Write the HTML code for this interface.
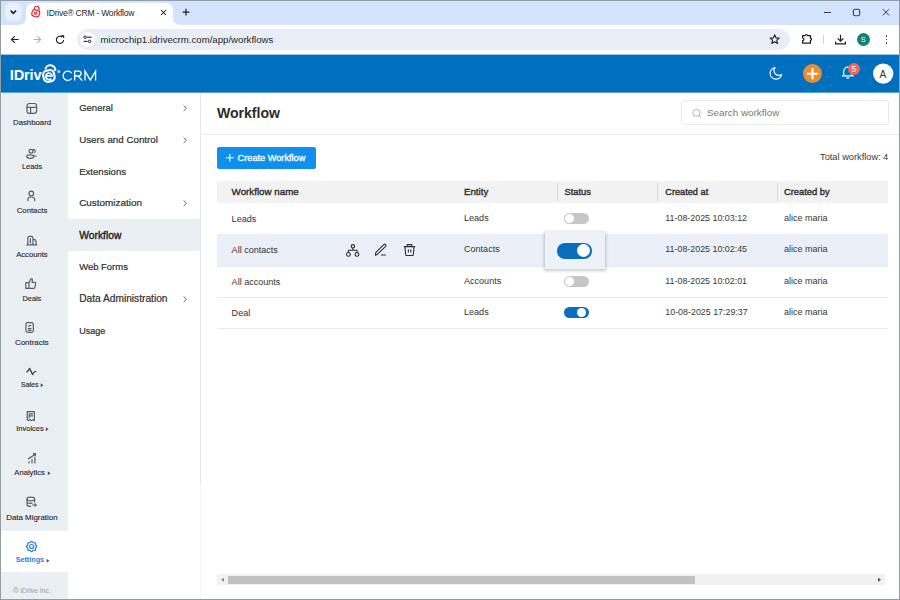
<!DOCTYPE html>
<html><head><meta charset="utf-8"><title>Workflow</title>
<style>
*{box-sizing:border-box;margin:0;padding:0}
html,body{width:900px;height:600px;overflow:hidden;background:#fff;font-family:"Liberation Sans",sans-serif}
.a{position:absolute}
.t{position:absolute;line-height:1;white-space:nowrap}
svg{overflow:visible}
</style></head><body>
<div class="a" style="left:0px;top:0px;width:900px;height:25px;background:#d3e3fd"></div>
<div class="a" style="left:5px;top:3px;width:17px;height:18px;background:#e8f0fe;border-radius:6px"></div>
<svg class="a" style="left:0;top:0" width="900" height="600" viewBox="0 0 900 600"><path d="M10.6 10.6 L13.3 13.3 L16 10.6" stroke="#1f1f1f" stroke-width="1.6" fill="none"/></svg>
<svg class="a" style="left:18px;top:3px" width="164" height="22" viewBox="0 0 164 22"><path d="M0 22 Q8 22 8 14 L8 8 Q8 0 16 0 L147 0 Q155 0 155 8 L155 14 Q155 22 163 22 Z" fill="#fff"/></svg>
<svg class="a" style="left:0;top:0" width="900" height="600" viewBox="0 0 900 600"><g transform="rotate(12 36 12)"><path d="M33.6 10 V8.6 A2.4 2.4 0 0 1 38.4 8.6 V10" stroke="#e8262d" stroke-width="1.2" fill="none"/><rect x="32.2" y="10" width="7.6" height="6.6" rx="2.6" stroke="#e8262d" stroke-width="1.2" fill="none"/><path d="M34.6 13.3 H37.4 A1.4 1.4 0 1 0 37 14.4" stroke="#e8262d" stroke-width="0.9" fill="none"/></g></svg>
<div class="t" style="left:46.60px;top:8.970px;font-size:8.6px;color:#1f1f1f;font-weight:400;letter-spacing:-0.27px">IDrive® CRM - Workflow</div>
<svg class="a" style="left:0;top:0" width="900" height="600" viewBox="0 0 900 600"><path d="M161 10 L166 15 M166 10 L161 15" stroke="#1f1f1f" stroke-width="1.05"/><path d="M186 8.8 V15.6 M182.6 12.2 H189.4" stroke="#1f1f1f" stroke-width="1.2"/></svg>
<svg class="a" style="left:0;top:0" width="900" height="600" viewBox="0 0 900 600"><path d="M824 12.5 H831" stroke="#3b3b3b" stroke-width="1"/><rect x="853.3" y="9.3" width="6.4" height="6.4" rx="1.6" stroke="#3b3b3b" stroke-width="1.1" fill="none"/><path d="M882.8 9.2 L889 15.4 M889 9.2 L882.8 15.4" stroke="#3b3b3b" stroke-width="1"/></svg>
<div class="a" style="left:0px;top:25px;width:900px;height:29px;background:#fff"></div>
<div class="a" style="left:77px;top:29px;width:713px;height:21px;background:#e9eef6;border-radius:10.5px"></div>
<svg class="a" style="left:0;top:0" width="900" height="600" viewBox="0 0 900 600"><path d="M18.6 39.5 H11.6 M14.8 36.2 L11.5 39.5 L14.8 42.8" stroke="#1f1f1f" stroke-width="1.1" fill="none"/><path d="M33.6 39.5 H40.6 M37.4 36.2 L40.7 39.5 L37.4 42.8" stroke="#b0b0b0" stroke-width="1.1" fill="none"/><path d="M63.6 40 A3.6 3.6 0 1 1 62.3 37" stroke="#1f1f1f" stroke-width="1.15" fill="none"/><path d="M61 35.3 H64.2 V38.5 Z" fill="#1f1f1f"/></svg>
<div class="a" style="left:80px;top:32px;width:15px;height:15px;background:#fff;border-radius:50%"></div>
<svg class="a" style="left:0;top:0" width="900" height="600" viewBox="0 0 900 600"><circle cx="85.2" cy="37.2" r="1.25" stroke="#1f1f1f" stroke-width="1" fill="none"/><path d="M87.2 37.2 H91.6" stroke="#1f1f1f" stroke-width="1.1"/><circle cx="89.6" cy="41.4" r="1.25" stroke="#1f1f1f" stroke-width="1" fill="none"/><path d="M83.6 41.4 H87.6" stroke="#1f1f1f" stroke-width="1.1"/></svg>
<div class="t" style="left:100.60px;top:34.990px;font-size:9.64px;color:#1f1f1f;font-weight:400;">microchip1.idrivecrm.com/app/workflows</div>
<svg class="a" style="left:0;top:0" width="900" height="600" viewBox="0 0 900 600"><path d="M774.7 34.8 L776 37.9 L779.3 38.1 L776.8 40.2 L777.6 43.5 L774.7 41.7 L771.8 43.5 L772.6 40.2 L770.1 38.1 L773.4 37.9 Z" stroke="#1f1f1f" stroke-width="1.1" fill="none" stroke-linejoin="round"/></svg>
<svg class="a" style="left:0;top:0" width="900" height="600" viewBox="0 0 900 600"><path d="M802.6 35.6 H805.2 A1.1 1.1 0 0 1 807.4 35.6 H810.4 V38.2 A1.1 1.1 0 0 1 810.4 40.4 V43.2 H802.6 V40.6 A1.3 1.3 0 0 0 802.6 38 Z" stroke="#1f1f1f" stroke-width="1.2" fill="none" stroke-linejoin="round"/></svg>
<div class="a" style="left:823px;top:35px;width:1px;height:9px;background:#c7d3e8"></div>
<svg class="a" style="left:0;top:0" width="900" height="600" viewBox="0 0 900 600"><path d="M840.5 34.8 V41 M837.6 38.3 L840.5 41.2 L843.4 38.3 M835.6 41.5 V43.8 H845.4 V41.5" stroke="#1f1f1f" stroke-width="1.2" fill="none"/></svg>
<div class="a" style="left:857px;top:33px;width:13px;height:13px;background:#15806f;border-radius:50%"></div>
<div class="t" style="left:860.80px;top:36.471px;font-size:7.3px;color:#fff;font-weight:400;">S</div>
<div class="a" style="left:885.7px;top:35.0px;width:1.6px;height:1.6px;background:#1f1f1f;border-radius:50%"></div>
<div class="a" style="left:885.7px;top:38.6px;width:1.6px;height:1.6px;background:#1f1f1f;border-radius:50%"></div>
<div class="a" style="left:885.7px;top:42.2px;width:1.6px;height:1.6px;background:#1f1f1f;border-radius:50%"></div>
<div class="a" style="left:0px;top:55px;width:900px;height:37px;background:#0070be"></div>
<div class="a" style="left:0px;top:54px;width:900px;height:1px;background:#9cc4e4"></div>
<div class="t" style="left:9.80px;top:67.991px;font-size:14.6px;color:#fff;font-weight:700;letter-spacing:-0.15px">IDriv</div>
<svg class="a" style="left:0;top:0" width="900" height="600" viewBox="0 0 900 600"><g transform="rotate(-12 48.8 76)"><rect x="43.4" y="70.4" width="11" height="11.2" rx="4" stroke="#fff" stroke-width="2.1" fill="none"/></g><path d="M45.4 69.4 A4.7 4.6 0 0 1 55.2 70.8" stroke="#fff" stroke-width="2" fill="none"/><path d="M45.9 75.9 H52 A3.1 3.3 0 1 0 51.2 78.6" stroke="#fff" stroke-width="1.8" fill="none"/><circle cx="58.8" cy="71.6" r="1.5" fill="#fff" opacity="0.7"/></svg>
<svg class="a" style="left:0;top:0" width="900" height="600" viewBox="0 0 900 600"><g stroke="#fff" stroke-width="1.3" fill="none"><path d="M71.6 73.2 A4.6 4.7 0 1 0 71.6 78.4"/><path d="M74.7 80.6 V71.2 H78.7 A2.4 2.4 0 0 1 78.7 76 H74.7 M78.2 76 L82.2 80.6"/><path d="M85 80.6 V71.2 L90.3 80.2 L95.6 71.2 V80.6"/></g></svg>
<svg class="a" style="left:0;top:0" width="900" height="600" viewBox="0 0 900 600"><path d="M775 67.6 A5.8 5.8 0 1 0 781.6 74.4 A4.8 4.8 0 0 1 775 67.6 Z" stroke="#fff" stroke-width="1.2" fill="none" stroke-linejoin="round"/></svg>
<div class="a" style="left:803px;top:64px;width:19px;height:19px;background:#e98f2e;border-radius:50%"></div>
<svg class="a" style="left:0;top:0" width="900" height="600" viewBox="0 0 900 600"><path d="M812.5 69 V78.4 M807.8 73.7 H817.2" stroke="#fff" stroke-width="2.1" stroke-linecap="round"/></svg>
<svg class="a" style="left:0;top:0" width="900" height="600" viewBox="0 0 900 600"><path d="M843.7 75.4 V71.6 A4.1 4.4 0 0 1 851.9 71.6 V75.4" stroke="#fff" stroke-width="1.15" fill="none"/><path d="M842.4 75.9 H853.2" stroke="#fff" stroke-width="1.3" stroke-linecap="round"/><path d="M846.5 77.2 A1.4 1.4 0 0 0 849.1 77.2" stroke="#fff" stroke-width="1.15" fill="none"/></svg>
<div class="a" style="left:848px;top:63px;width:12px;height:12px;background:#f2665c;border-radius:50%"></div>
<div class="t" style="left:851.60px;top:64.970px;font-size:8.6px;color:#fff;font-weight:400;">5</div>
<svg class="a" style="left:0;top:0" width="900" height="600" viewBox="0 0 900 600"><circle cx="883.2" cy="73.6" r="10.2" fill="#fff"/></svg>
<div class="t" style="left:879.60px;top:70.016px;font-size:10.2px;color:#333;font-weight:400;">A</div>
<div class="a" style="left:0px;top:92px;width:68px;height:508px;background:#eaeff4"></div>
<div class="a" style="left:0px;top:531px;width:68px;height:41px;background:#fff"></div>
<svg class="a" style="left:0;top:0" width="900" height="600" viewBox="0 0 900 600"><g stroke="#55606a" stroke-width="1.2" fill="none" stroke-linejoin="round" stroke-linecap="round" ><rect x="27" y="103.5" width="9.6" height="9.8" rx="2.4"/><path d="M27 107.3 H36.6 M30.6 107.3 V113.3"/></g></svg>
<div class="t" style="left:13.00px;top:119.047px;font-size:7.8px;color:#2e2e2e;font-weight:400;-webkit-text-stroke:0.15px #2e2e2e">Dashboard</div>
<svg class="a" style="left:0;top:0" width="900" height="600" viewBox="0 0 900 600"><g stroke="#55606a" stroke-width="1.2" fill="none" stroke-linejoin="round" stroke-linecap="round" ><circle cx="31" cy="151.2" r="1.9"/><path d="M33.2 149.6 A1.7 1.7 0 0 1 34.6 152.6"/><ellipse cx="30.3" cy="156.6" rx="3.6" ry="1.7"/><path d="M34.2 156 H36.2"/></g></svg>
<div class="t" style="left:22.00px;top:162.986px;font-size:7.4px;color:#2e2e2e;font-weight:400;-webkit-text-stroke:0.15px #2e2e2e">Leads</div>
<svg class="a" style="left:0;top:0" width="900" height="600" viewBox="0 0 900 600"><g stroke="#55606a" stroke-width="1.2" fill="none" stroke-linejoin="round" stroke-linecap="round" ><circle cx="31.3" cy="193.5" r="2.3"/><path d="M27.9 200.6 V199.6 A3.4 2.6 0 0 1 34.7 199.6 V200.6"/></g></svg>
<div class="t" style="left:16.80px;top:207.007px;font-size:7.73px;color:#2e2e2e;font-weight:400;-webkit-text-stroke:0.15px #2e2e2e">Contacts</div>
<svg class="a" style="left:0;top:0" width="900" height="600" viewBox="0 0 900 600"><g stroke="#55606a" stroke-width="1.2" fill="none" stroke-linejoin="round" stroke-linecap="round" ><path d="M27.8 244.8 V238 A1.8 1.8 0 0 1 29.6 236.3 H31.2 A1.8 1.8 0 0 1 33 238 V244.8 M33 239.6 H34.4 A1.6 1.6 0 0 1 36 241.2 V244.8 M26.8 244.8 H36.8 M30.4 238.6 V243"/></g></svg>
<div class="t" style="left:16.20px;top:250.966px;font-size:7.66px;color:#2e2e2e;font-weight:400;-webkit-text-stroke:0.15px #2e2e2e">Accounts</div>
<svg class="a" style="left:0;top:0" width="900" height="600" viewBox="0 0 900 600"><g stroke="#55606a" stroke-width="1.2" fill="none" stroke-linejoin="round" stroke-linecap="round" ><path d="M29 282.6 L30.6 279.2 A1 1 0 0 1 32.4 279.8 L32 282.4 H34.6 A1.1 1.1 0 0 1 35.6 283.7 L34.8 287.6 A1.2 1.2 0 0 1 33.6 288.4 H29 Z M25.8 282.6 H29 V288.4 H25.8 Z"/></g></svg>
<div class="t" style="left:22.50px;top:295.028px;font-size:7.35px;color:#2e2e2e;font-weight:400;-webkit-text-stroke:0.15px #2e2e2e">Deals</div>
<svg class="a" style="left:0;top:0" width="900" height="600" viewBox="0 0 900 600"><g stroke="#55606a" stroke-width="1.2" fill="none" stroke-linejoin="round" stroke-linecap="round" ><rect x="25.9" y="322.6" width="7.4" height="9.8" rx="1.8"/><path d="M28.4 326.2 L30.8 325.4 M28.3 328.6 H31 M28.3 330.4 H31"/></g></svg>
<div class="t" style="left:15.00px;top:338.963px;font-size:7.9px;color:#2e2e2e;font-weight:400;-webkit-text-stroke:0.15px #2e2e2e">Contracts</div>
<svg class="a" style="left:0;top:0" width="900" height="600" viewBox="0 0 900 600"><path d="M26.9 371.9 Q28.2 371.2 29.6 368.4 L32.6 374.6 Q33.8 371.6 35.8 371.4" stroke="#3f4a53" stroke-width="1.4" fill="none" stroke-linejoin="round" stroke-linecap="round"/></svg>
<div class="t" style="left:21.00px;top:381.024px;font-size:7.0px;color:#2e2e2e;font-weight:400;-webkit-text-stroke:0.15px #2e2e2e">Sales</div>
<svg class="a" style="left:0;top:0" width="900" height="600" viewBox="0 0 900 600"><path d="M40.7 383.3 L43.5 385.3 L40.7 387.3 Z" fill="#555"/></svg>
<svg class="a" style="left:0;top:0" width="900" height="600" viewBox="0 0 900 600"><g stroke="#55606a" stroke-width="1.2" fill="none" stroke-linejoin="round" stroke-linecap="round" ><path d="M27.2 411.6 H34.4 V420.6 L33 419.8 L31.6 420.6 L30.2 419.8 L28.6 420.6 L27.2 419.8 Z M29.2 413.8 H32.6 M30.4 415.8 H32.6 M29.2 413.8 V418"/></g></svg>
<div class="t" style="left:16.20px;top:424.984px;font-size:7.52px;color:#2e2e2e;font-weight:400;-webkit-text-stroke:0.15px #2e2e2e">Invoices</div>
<svg class="a" style="left:0;top:0" width="900" height="600" viewBox="0 0 900 600"><path d="M45.8 427.3 L48.599999999999994 429.3 L45.8 431.3 Z" fill="#555"/></svg>
<svg class="a" style="left:0;top:0" width="900" height="600" viewBox="0 0 900 600"><g stroke="#55606a" stroke-width="1.2" fill="none" stroke-linejoin="round" stroke-linecap="round" ><path d="M29 463 V461.6 M32 463 V459.6 M34.9 463 V457.2 M28.4 458.6 Q32 457 35 454 M33.4 453.6 H35.4 V455.6"/></g></svg>
<div class="t" style="left:14.30px;top:468.957px;font-size:7.67px;color:#2e2e2e;font-weight:400;-webkit-text-stroke:0.15px #2e2e2e">Analytics</div>
<svg class="a" style="left:0;top:0" width="900" height="600" viewBox="0 0 900 600"><path d="M47.8 471.3 L50.599999999999994 473.3 L47.8 475.3 Z" fill="#555"/></svg>
<svg class="a" style="left:0;top:0" width="900" height="600" viewBox="0 0 900 600"><g stroke="#55606a" stroke-width="1.2" fill="none" stroke-linejoin="round" stroke-linecap="round" ><ellipse cx="30.8" cy="499" rx="3.8" ry="1.8"/><path d="M27 499 V505 A3.8 1.6 0 0 0 30.6 506.4 M34.6 499 V502 M27 502.2 A3.8 1.6 0 0 0 32 503.2"/><path d="M32.6 505 H36 M35 503.8 L36.2 505 L35 506.2" stroke-width="1.1"/></g></svg>
<div class="t" style="left:6.20px;top:513.996px;font-size:7.92px;color:#2e2e2e;font-weight:400;-webkit-text-stroke:0.15px #2e2e2e">Data Migration</div>
<svg class="a" style="left:0;top:0" width="900" height="600" viewBox="0 0 900 600"><path d="M31.60 541.30 L33.21 542.62 L35.28 542.82 L35.48 544.89 L36.80 546.50 L35.48 548.11 L35.28 550.18 L33.21 550.38 L31.60 551.70 L29.99 550.38 L27.92 550.18 L27.72 548.11 L26.40 546.50 L27.72 544.89 L27.92 542.82 L29.99 542.62 Z" stroke="#2a86d6" stroke-width="1.3" fill="none" stroke-linejoin="round"/><circle cx="31.6" cy="546.5" r="2" stroke="#2a86d6" stroke-width="1.2" fill="none"/></svg>
<div class="t" style="left:15.70px;top:555.955px;font-size:7.2px;color:#1f7fd2;font-weight:700;">Settings</div>
<svg class="a" style="left:0;top:0" width="900" height="600" viewBox="0 0 900 600"><path d="M46.6 558.8 L49.4 560.8 L46.6 562.8 Z" fill="#555"/></svg>
<div class="t" style="left:13.30px;top:587.944px;font-size:6.8px;color:#a7acb1;font-weight:400;-webkit-text-stroke:0.15px #a7acb1">© IDrive Inc.</div>
<div class="a" style="left:68px;top:92px;width:133px;height:508px;background:#fff"></div>
<div class="a" style="left:200px;top:92px;width:1px;height:393px;background:#e4e8ec"></div>
<div class="a" style="left:200px;top:485px;width:1px;height:114px;background:#f2f4f6"></div>
<div class="a" style="left:68px;top:219px;width:132px;height:32px;background:#eaeff4"></div>
<div class="t" style="left:79.20px;top:103.008px;font-size:9.5px;color:#2e2e2e;font-weight:400;-webkit-text-stroke:0.2px #2e2e2e">General</div>
<svg class="a" style="left:0;top:0" width="900" height="600" viewBox="0 0 900 600"><path d="M183.6 105.6 L186.4 108.3 L183.6 111" stroke="#666" stroke-width="1" fill="none"/></svg>
<div class="t" style="left:79.20px;top:134.971px;font-size:9.78px;color:#2e2e2e;font-weight:400;-webkit-text-stroke:0.2px #2e2e2e">Users and Control</div>
<svg class="a" style="left:0;top:0" width="900" height="600" viewBox="0 0 900 600"><path d="M183.6 137.6 L186.4 140.3 L183.6 143" stroke="#666" stroke-width="1" fill="none"/></svg>
<div class="t" style="left:79.20px;top:167.032px;font-size:9.59px;color:#2e2e2e;font-weight:400;-webkit-text-stroke:0.2px #2e2e2e">Extensions</div>
<div class="t" style="left:79.20px;top:197.961px;font-size:9.91px;color:#2e2e2e;font-weight:400;-webkit-text-stroke:0.2px #2e2e2e">Customization</div>
<svg class="a" style="left:0;top:0" width="900" height="600" viewBox="0 0 900 600"><path d="M183.6 200.6 L186.4 203.3 L183.6 206" stroke="#666" stroke-width="1" fill="none"/></svg>
<div class="t" style="left:79.20px;top:230.981px;font-size:10.3px;color:#262626;font-weight:400;-webkit-text-stroke:0.4px #262626">Workflow</div>
<div class="t" style="left:79.20px;top:262.042px;font-size:9.46px;color:#2e2e2e;font-weight:400;-webkit-text-stroke:0.2px #2e2e2e">Web Forms</div>
<div class="t" style="left:79.20px;top:294.016px;font-size:10.2px;color:#2e2e2e;font-weight:400;-webkit-text-stroke:0.2px #2e2e2e">Data Administration</div>
<svg class="a" style="left:0;top:0" width="900" height="600" viewBox="0 0 900 600"><path d="M183.6 296.6 L186.4 299.3 L183.6 302" stroke="#666" stroke-width="1" fill="none"/></svg>
<div class="t" style="left:79.20px;top:327.031px;font-size:9.0px;color:#2e2e2e;font-weight:400;-webkit-text-stroke:0.2px #2e2e2e">Usage</div>
<div class="t" style="left:216.90px;top:106.014px;font-size:14.1px;color:#2c2c2c;font-weight:700;">Workflow</div>
<div class="a" style="left:681px;top:100px;width:208px;height:25px;border:1px solid #e8e9eb;border-radius:2.5px;background:#fff"></div>
<svg class="a" style="left:0;top:0" width="900" height="600" viewBox="0 0 900 600"><circle cx="696.4" cy="112.8" r="3.4" stroke="#bdbdbd" stroke-width="1.05" fill="none"/><path d="M698.9 115.3 L701 117.4" stroke="#bdbdbd" stroke-width="1.05"/></svg>
<div class="t" style="left:707.00px;top:107.995px;font-size:9.87px;color:#74787c;font-weight:400;">Search workflow</div>
<div class="a" style="left:201px;top:134px;width:698px;height:1px;background:#e6ebf0"></div>
<div class="a" style="left:217px;top:147px;width:99px;height:22px;background:#1090ec;border-radius:2px"></div>
<svg class="a" style="left:0;top:0" width="900" height="600" viewBox="0 0 900 600"><path d="M229.8 153.9 V161.7 M225.9 157.8 H233.7" stroke="#fff" stroke-width="1.1"/></svg>
<div class="t" style="left:237.60px;top:153.912px;font-size:9.2px;color:#fff;font-weight:400;-webkit-text-stroke:0.3px #fff">Create Workflow</div>
<div class="t" style="left:820.00px;top:152.903px;font-size:9.27px;color:#3a3a3a;font-weight:400;">Total workflow:</div>
<div class="t" style="left:883.00px;top:152.903px;font-size:9.27px;color:#3a3a3a;font-weight:400;">4</div>
<div class="a" style="left:217px;top:181px;width:671px;height:22px;background:#f2f2f2"></div>
<div class="a" style="left:557px;top:183px;width:1px;height:18px;background:#d8dbe1"></div>
<div class="a" style="left:657px;top:183px;width:1px;height:18px;background:#d8dbe1"></div>
<div class="a" style="left:777px;top:183px;width:1px;height:18px;background:#d8dbe1"></div>
<div class="t" style="left:231.60px;top:186.971px;font-size:9.78px;color:#2a2a2a;font-weight:400;-webkit-text-stroke:0.35px #2a2a2a">Workflow name</div>
<div class="t" style="left:464.00px;top:187.039px;font-size:9.7px;color:#2a2a2a;font-weight:400;-webkit-text-stroke:0.35px #2a2a2a">Entity</div>
<div class="t" style="left:564.50px;top:187.885px;font-size:9.35px;color:#2a2a2a;font-weight:400;-webkit-text-stroke:0.35px #2a2a2a">Status</div>
<div class="t" style="left:665.30px;top:187.912px;font-size:9.2px;color:#2a2a2a;font-weight:400;-webkit-text-stroke:0.35px #2a2a2a">Created at</div>
<div class="t" style="left:783.90px;top:187.877px;font-size:9.36px;color:#2a2a2a;font-weight:400;-webkit-text-stroke:0.35px #2a2a2a">Created by</div>
<div class="a" style="left:217px;top:234px;width:671px;height:1px;background:#e7e9ec"></div>
<div class="t" style="left:231.60px;top:214.989px;font-size:9.05px;color:#333;font-weight:400;">Leads</div>
<div class="t" style="left:464.00px;top:213.989px;font-size:9.05px;color:#333;font-weight:400;">Leads</div>
<div class="t" style="left:665.30px;top:214.016px;font-size:8.9px;color:#383838;font-weight:400;">11-08-2025 10:03:12</div>
<div class="t" style="left:783.90px;top:213.989px;font-size:9.05px;color:#383838;font-weight:400;">alice maria</div>
<div class="a" style="left:564px;top:213px;width:25px;height:11px;background:#c6c6c6;border-radius:6px"></div>
<div class="a" style="left:564px;top:213px;width:11px;height:11px;background:#fff;border-radius:50%;border:1px solid #c6c6c6"></div>
<div class="a" style="left:217px;top:234px;width:671px;height:32px;background:#ebf0f8"></div>
<div class="a" style="left:217px;top:266px;width:671px;height:1px;background:#e7e9ec"></div>
<div class="t" style="left:231.60px;top:245.989px;font-size:9.05px;color:#333;font-weight:400;">All contacts</div>
<div class="t" style="left:464.00px;top:244.989px;font-size:9.05px;color:#333;font-weight:400;">Contacts</div>
<div class="t" style="left:665.30px;top:245.016px;font-size:8.9px;color:#383838;font-weight:400;">11-08-2025 10:02:45</div>
<div class="t" style="left:783.90px;top:244.989px;font-size:9.05px;color:#383838;font-weight:400;">alice maria</div>
<div class="a" style="left:217px;top:297px;width:671px;height:1px;background:#e7e9ec"></div>
<div class="t" style="left:231.60px;top:277.989px;font-size:9.05px;color:#333;font-weight:400;">All accounts</div>
<div class="t" style="left:464.00px;top:276.989px;font-size:9.05px;color:#333;font-weight:400;">Accounts</div>
<div class="t" style="left:665.30px;top:277.016px;font-size:8.9px;color:#383838;font-weight:400;">11-08-2025 10:02:01</div>
<div class="t" style="left:783.90px;top:276.989px;font-size:9.05px;color:#383838;font-weight:400;">alice maria</div>
<div class="a" style="left:564px;top:276px;width:25px;height:11px;background:#c6c6c6;border-radius:6px"></div>
<div class="a" style="left:564px;top:276px;width:11px;height:11px;background:#fff;border-radius:50%;border:1px solid #c6c6c6"></div>
<div class="a" style="left:217px;top:328px;width:671px;height:1px;background:#e7e9ec"></div>
<div class="t" style="left:231.60px;top:308.989px;font-size:9.05px;color:#333;font-weight:400;">Deal</div>
<div class="t" style="left:464.00px;top:307.989px;font-size:9.05px;color:#333;font-weight:400;">Leads</div>
<div class="t" style="left:665.30px;top:308.016px;font-size:8.9px;color:#383838;font-weight:400;">10-08-2025 17:29:37</div>
<div class="t" style="left:783.90px;top:307.989px;font-size:9.05px;color:#383838;font-weight:400;">alice maria</div>
<div class="a" style="left:564px;top:307px;width:25px;height:11px;background:#0a6ebd;border-radius:6px"></div>
<div class="a" style="left:577px;top:308px;width:9px;height:9px;background:#fff;border-radius:50%"></div>
<div class="a" style="left:545px;top:232px;width:60px;height:37px;background:#edf1f8;box-shadow:0 1px 3px 1px rgba(0,0,0,0.2)"></div>
<div class="a" style="left:557px;top:243px;width:35px;height:16px;background:#0a6ebd;border-radius:8px"></div>
<div class="a" style="left:577px;top:244px;width:13px;height:13px;background:#fff;border-radius:50%"></div>
<svg class="a" style="left:0;top:0" width="900" height="600" viewBox="0 0 900 600"><g stroke="#2e2e2e" stroke-width="1.1" fill="none" stroke-linejoin="round"><circle cx="352.9" cy="246.3" r="1.7"/><path d="M352.9 248 V250.2 M348.4 252.4 V250.2 H357 V252.4"/><circle cx="348.4" cy="254.4" r="1.9"/><circle cx="357" cy="254.4" r="1.9"/><path d="M375.4 255.2 L375.9 252.4 L383.8 244.6 A1.2 1.2 0 0 1 385.6 246.3 L377.6 254.2 Z M380.9 255 H385.8"/><path d="M403.8 246.6 H415.2 M407.2 246.4 V244.6 H411.8 V246.4 M405 246.8 L405.6 254.4 A1.2 1.2 0 0 0 406.8 255.5 H412.2 A1.2 1.2 0 0 0 413.4 254.4 L414 246.8 M408.4 249.4 V252.6 M410.8 249.4 V252.6"/></g></svg>
<div class="a" style="left:217px;top:574px;width:668px;height:11px;background:#f1f1f1"></div>
<div class="a" style="left:228px;top:575.5px;width:467px;height:8.5px;background:#c1c1c1"></div>
<svg class="a" style="left:0;top:0" width="900" height="600" viewBox="0 0 900 600"><path d="M224 577.8 L221 579.8 L224 581.8 Z" fill="#858585"/><path d="M878 577.8 L881 579.8 L878 581.8 Z" fill="#505050"/></svg>
<div class="a" style="left:0px;top:92px;width:900px;height:1px;background:#5ca2d4"></div>
<div class="a" style="left:0px;top:0px;width:900px;height:1px;background:#919ca4"></div>
<div class="a" style="left:0px;top:0px;width:1px;height:600px;background:#919ca4"></div>
<div class="a" style="left:899px;top:0px;width:1px;height:600px;background:#919ca4"></div>
<div class="a" style="left:0px;top:599px;width:900px;height:1px;background:#919ca4"></div>
</body></html>
